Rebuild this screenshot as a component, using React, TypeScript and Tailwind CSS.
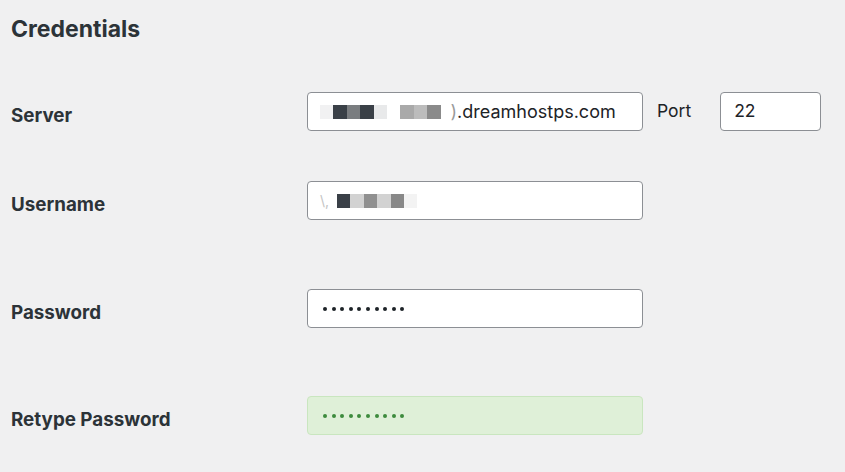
import React from 'react';

const font = { fontFamily: 'Inter, "Noto Sans", sans-serif' };

// pixelated (redacted) blocks inside a field
const Blocks = ({ items }: { items: (string | null)[] }) => (
  <div className="flex h-[14px]">
    {items.map((c, i) => (
      <span key={i} className={`w-[13.4px] h-full ${c ?? 'bg-transparent'}`} />
    ))}
  </div>
);

const Dots = ({ color }: { color: string }) => (
  <div className="flex gap-[4.6px]">
    {Array.from({ length: 10 }).map((_, i) => (
      <span key={i} className={`w-[4px] h-[4px] rounded-full ${color}`} />
    ))}
  </div>
);

const Field = ({ children, green }: { children?: React.ReactNode; green?: boolean }) => (
  <div
    className={
      green
        ? 'w-[336px] h-[39px] rounded-[4px] border border-[#c9e6bf] bg-[#dff0d8] flex items-center pl-[15px]'
        : 'w-[336px] h-[39px] rounded-[4px] border border-[#8c8f94] bg-white flex items-center pl-[12px]'
    }
  >
    {children}
  </div>
);

const Row = ({ label, children, className }: { label: string; children: React.ReactNode; className: string }) => (
  <div className={`flex items-start ${className}`}>
    <div className="w-[296px] pt-[12px] text-[18.8px] leading-6 font-bold text-[#2c3338]">{label}</div>
    {children}
  </div>
);

export default function App() {
  return (
    <div className="w-[845px] h-[472px] bg-[#f0f0f1] pl-[11px] overflow-hidden" style={font}>
      <h2 className="pt-[15px] text-[23px] leading-7 font-bold text-[#2c3338]">Credentials</h2>

      <Row label="Server" className="mt-[49px] h-[89px]">
        <div className="flex items-start">
          <Field>
            <div className="flex items-center text-[18px] text-[#1d2327]">
              <Blocks
                items={[
                  'bg-[#f1f1f2]',
                  'bg-[#3a4047]',
                  'bg-[#7a7d80]',
                  'bg-[#3a4047]',
                  'bg-[#e8e9ea]',
                  null,
                  'bg-[#a9a9a9]',
                  'bg-[#bcbcbc]',
                  'bg-[#8a8a8a]',
                ]}
              />
              <span className="ml-[10px] text-[#1d2327]">
                <span className="text-[#9a9a9a]">)</span>.dreamhostps.com
              </span>
            </div>
          </Field>
          <div className="ml-[14px] mr-[29px] h-[39px] flex items-center text-[17.5px] text-[#1d2327]">Port</div>
          <div className="w-[101px] h-[39px] rounded-[4px] border border-[#8c8f94] bg-white flex items-center pl-[13px] text-[17.5px] text-[#1d2327]">
            22
          </div>
        </div>
      </Row>

      <Row label="Username" className="h-[108px]">
        <Field>
          <div className="flex items-center">
            <span className="text-[14px] text-[#c4c4c4] w-[10px] mr-[7px]">\,</span>
            <Blocks
              items={[
                'bg-[#3a4047]',
                'bg-[#d2d2d2]',
                'bg-[#909090]',
                'bg-[#d2d2d2]',
                'bg-[#888888]',
                'bg-[#f3f3f3]',
              ]}
            />
          </div>
        </Field>
      </Row>

      <Row label="Password" className="h-[107px]">
        <Field>
          <div className="pl-[3px]">
            <Dots color="bg-[#1d2327]" />
          </div>
        </Field>
      </Row>

      <Row label="Retype Password" className="">
        <Field green>
          <Dots color="bg-[#3d8b3d]" />
        </Field>
      </Row>
    </div>
  );
}
